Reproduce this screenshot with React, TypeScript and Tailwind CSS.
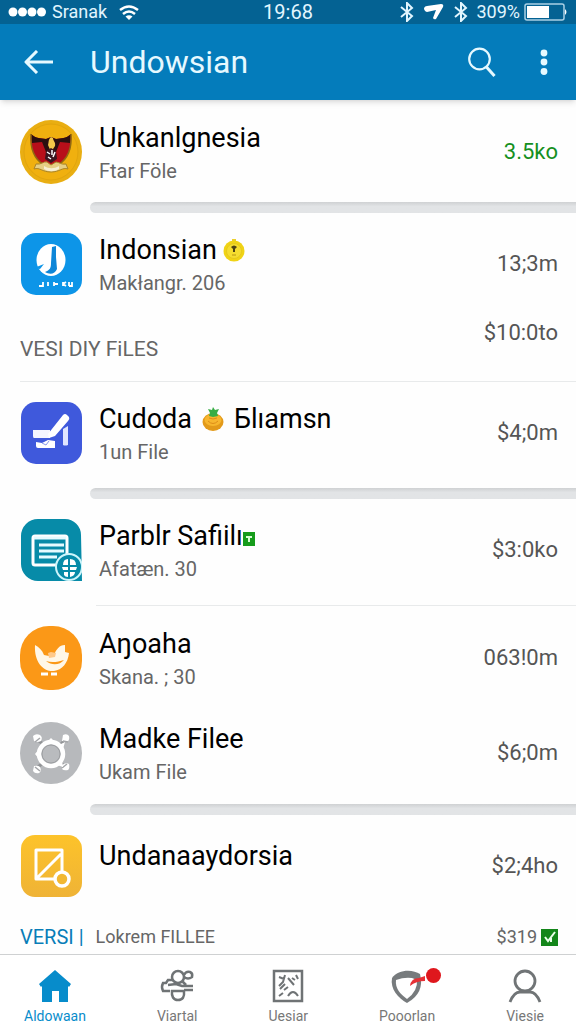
import { ReactNode } from 'react'
import { clsx } from 'clsx'

type Entry = {
  title: ReactNode
  subtitle?: string
  amount: string
  icon: ReactNode
  highlight?: boolean
  spacing?: string
  after?: 'bar' | 'line'
}

function Garuda() {
  return (
    <svg viewBox="0 0 62 64" className="h-16 w-full" aria-hidden="true">
      <ellipse cx="31" cy="32" rx="31" ry="32" fill="#e9ae12" />
      <ellipse cx="31" cy="32" rx="27" ry="28" fill="#f0b00f" stroke="#e2a50d" />
      <path d="M11 14c5 5 10 4 15 5l5-2 5 2c5-1 10 0 15-5 1 14-3 25-13 31H24C14 39 10 28 11 14Z" fill="#b80f1a" />
      <path d="M11 14c5 5 10 4 15 5l5-2 5 2c5-1 10 0 15-5l-1 9-10-1-4 10h-10l-4-10-10 1Z" fill="#2b1010" />
      <path d="M11 14c-1 14 3 25 13 31M51 14c1 14-3 25-13 31" fill="none" stroke="#8f6a12" strokeWidth="1.5" />
      <path d="M31 17c-3 3-2 5-3 8l3 7 4-6c1-4-2-5-2-8Z" fill="#f3c84a" />
      <path d="M26 31l5-3 5 3 1 8-6 4-6-4Z" fill="#3a1620" />
      <path d="M27 32l3 2M32 30v5M35 32l-2 5M28 37l3 2" stroke="#fff" strokeWidth="1.5" />
      <path d="M16 44c5 1 8-3 11-2l4 3 5-3c3 0 5 3 10 2l2 5c-6-2-8 3-17 3s-11-5-17-3Z" fill="#e6cf84" stroke="#a98429" strokeWidth="1" />
      <path d="M24 46c5 3 10 3 15 0v3c-5 3-10 3-15 0Z" fill="#f7efd2" />
    </svg>
  )
}

function BlueBadge() {
  return (
    <svg viewBox="0 0 62 62" className="w-full" aria-hidden="true">
      <rect x="1" width="61" height="62" rx="15" fill="#0d95e8" />
      <ellipse cx="31" cy="27" rx="14.500" ry="16" fill="#fff" />
      <path d="M32 14l4-1v11l1 12c-2 5-7 6-12 3 5-2 6-4 6-9Z" fill="#0d86d8" />
      <path d="M14 35l10-4-4 5Z" fill="#0d95e8" />
      <path d="M19 53h4v-4M28 49v4M34 49v4M34 51h4M43 49v4M43 51l3-2M43 51l3 2M49 49v4M52 49v4h-3" fill="none" stroke="#fff" strokeWidth="1.800" />
    </svg>
  )
}

function ScannerIcon() {
  return (
    <svg viewBox="0 0 62 62" className="w-full" aria-hidden="true">
      <rect x="1" width="61" height="62" rx="15" fill="#3f59dc" />
      <path d="M13 28h17v8H14q-1 0-1-2Z" fill="#f4f6ff" />
      <path d="M28 32L43 13q2-2 4 0l2 2q1 2-1 4L35 34l-6 2Z" fill="#fff" />
      <path d="M43 27l5-3v19q-3 1-5 0Z" fill="#dfe5ff" />
      <path d="M16 40l6 1 6-3 7 1v7H18q-2 0-2-2Z" fill="#fff" />
      <path d="M22 41l4 2 3-4" fill="none" stroke="#8799ec" />
    </svg>
  )
}

function DocumentIcon() {
  return (
    <svg viewBox="0 0 62 62" className="w-full" aria-hidden="true">
      <path d="M18 0h27a16 16 0 0 1 16 16l1 46H18A17 17 0 0 1 1 45V17A17 17 0 0 1 18 0Z" fill="#078ba8" />
      <path d="M15 17h30q2 0 2 2v27H15q-2 0-2-2V19q0-2 2-2Z" fill="none" stroke="#fff" strokeWidth="3" />
      <path d="M14 19h32M19 26h25M19 32h25M19 38h18" stroke="#e5fbff" strokeWidth="3" />
      <circle cx="49" cy="48" r="13" fill="#078ba8" stroke="#cdf5fb" strokeWidth="2" />
      <path d="M43 46q0-6 5-6v6ZM50 40q6 0 6 6h-6ZM42 48h6v3h-5ZM50 48h7l-1 3h-6ZM44 53h4v5q-3 0-4-2ZM50 53h5q0 4-5 5Z" fill="#fff" />
    </svg>
  )
}

function BirdIcon() {
  return (
    <svg viewBox="0 0 62 64" className="h-16 w-full" aria-hidden="true">
      <rect width="62" height="64" rx="29" fill="#fb9817" />
      <path d="M15 19c4 2 7 5 9 10l5 1 5-1c2-5 5-10 11-10v7l4 1c-1 10-7 17-15 18-10 1-20-8-19-26Z" fill="#fff7e8" />
      <path d="M26 35c6 2 12 1 18-1-4 5-12 6-18 1Z" fill="#fb9817" />
      <path d="M28 27l3-1 5 1-1 4-6 1Z" fill="#ffc98a" />
      <path d="M21 48h7M31 48h6" stroke="#fff" strokeWidth="3" />
    </svg>
  )
}

function GearIcon() {
  return (
    <svg viewBox="0 0 62 62" className="w-full" aria-hidden="true">
      <circle cx="31" cy="31" r="31" fill="#b7b9bc" />
      <path d="M18 18l7 6M45 18l-5 5M18 45l6-5M44 44l-5-5" stroke="#929497" strokeWidth="3" />
      <path d="M13 14q3-3 7-1 3 2 1 6-4 2-7 0Z" fill="#fff" />
      <path d="M43 13q4-2 6 1 1 4-2 6l-5-1Z" fill="#fff" />
      <path d="M14 44q4-1 6 1 2 4-1 6-4 1-6-2Z" fill="#fff" />
      <path d="M42 43q4-3 7-1 1 4-1 6-4 1-6-1Z" fill="#fff" />
      <path d="M15 20l5-4M43 19l5 1M15 45l5 4M42 46l5-4" stroke="#a4a6a9" strokeWidth="1.5" />
      <circle cx="31" cy="32" r="12" fill="#b9bbbe" stroke="#fff" strokeWidth="4.500" />
      <circle cx="31" cy="32" r="9" fill="none" stroke="#9c9ea1" />
      <path d="M26 21l5-5 5 5ZM19 37l-4-5 4-5ZM39 23l6-3-2 7ZM37 43l6 2-1-7Z" fill="#fff" />
    </svg>
  )
}

function NoteIcon() {
  return (
    <svg viewBox="0 0 62 62" className="w-full" aria-hidden="true">
      <defs>
        <linearGradient id="note" x1="0" y1="0" x2="0" y2="1">
          <stop stopColor="#fdc32a" />
          <stop offset="1" stopColor="#efb336" />
        </linearGradient>
      </defs>
      <rect x="1" width="61" height="62" rx="14" fill="url(#note)" />
      <path d="M42 37V15H16v29h18M17 43L41 19" fill="none" stroke="#fff" strokeWidth="3" strokeLinejoin="round" />
      <circle cx="42" cy="44" r="7" fill="#f2b832" stroke="#fff" strokeWidth="3.500" />
    </svg>
  )
}

function YellowDot() {
  return (
    <svg viewBox="0 0 22 24" className="h-6 w-[22px]" aria-hidden="true">
      <path d="M9 1h4v4H9Z" fill="#ecd02e" />
      <circle cx="11" cy="13" r="10.500" fill="#f0d315" />
      <circle cx="11" cy="13" r="7.500" fill="#f5dd30" stroke="#e2c41b" strokeWidth=".8" />
      <path d="M8 9q3-3 6 0l-2 2v3h-2v-3Z" fill="#4c4215" />
      <path d="M9 17h4" stroke="#b79512" />
    </svg>
  )
}

function Pineapple() {
  return (
    <svg viewBox="0 0 22 24" className="h-6 w-[22px]" aria-hidden="true">
      <ellipse cx="11" cy="15" rx="10.500" ry="9" fill="#e39a1a" />
      <ellipse cx="11" cy="13" rx="8.500" ry="6" fill="#f7b62e" />
      <path d="M6 14q5 5 10 0M7 11q4 2 8 0" fill="none" stroke="#dd8d18" />
      <path d="M11 10L7 9 8 6 6 2l4 1 1-3 2 3 4-1-2 4 1 3Z" fill="#37ad45" />
    </svg>
  )
}

const beforeSection: Entry[] = [
  {
    title: 'Unkanlgnesia',
    subtitle: 'Ftar Föle',
    amount: '3.5ko',
    icon: <Garuda />,
    highlight: true,
    spacing: 'pb-[18px]',
    after: 'bar',
  },
  {
    title: (
      <>
        Indonsian
        <span className="ml-1.5"><YellowDot /></span>
      </>
    ),
    subtitle: 'Makłangr. 206',
    amount: '13;3m',
    icon: <BlueBadge />,
  },
]

const afterSection: Entry[] = [
  {
    title: (
      <>
        Cudoda
        <span className="mx-2.5"><Pineapple /></span>
        Бlıamsn
      </>
    ),
    subtitle: '1un File',
    amount: '$4;0m',
    icon: <ScannerIcon />,
    spacing: 'pb-6',
    after: 'bar',
  },
  {
    title: (
      <>
        Parblr Safiilı
        <svg viewBox="0 0 12 14" className="mt-1.5 h-3.5 w-3" aria-hidden="true">
          <path d="M0 0h12v14H0Z" fill="#169c1b" />
          <path d="M3 5h6M6 5v5" stroke="#d9ffd4" strokeWidth="2" />
        </svg>
      </>
    ),
    subtitle: 'Afatæn. 30',
    amount: '$3:0ko',
    icon: <DocumentIcon />,
    spacing: 'pb-6',
    after: 'line',
  },
  { title: 'Aŋoaha', subtitle: 'Skana. ; 30', amount: '063!0m', icon: <BirdIcon />, spacing: 'pb-3' },
  { title: 'Madke Filee', subtitle: 'Ukam File', amount: '$6;0m', icon: <GearIcon />, after: 'bar' },
  { title: 'Undanaaydorsia', amount: '$2;4ho', icon: <NoteIcon /> },
]

function EntryRow({ entry }: { entry: Entry }) {
  return (
    <li>
      <div className={clsx('flex items-center pt-5 pr-[18px] pl-5', entry.spacing ?? 'pb-5')}>
        <div className="w-[62px] shrink-0">{entry.icon}</div>
        <div className={clsx('ml-[17px] h-[62px] min-w-0 flex-1', !entry.subtitle && 'pt-1')}>
          <h2 className="flex items-center text-[27px] leading-[34px] whitespace-nowrap text-black">{entry.title}</h2>
          {entry.subtitle && <p className="text-xl leading-8 text-[#666]">{entry.subtitle}</p>}
        </div>
        <span className={clsx('text-[22px] leading-7', entry.highlight ? 'text-[#15901f]' : 'text-[#555]')}>
          {entry.amount}
        </span>
      </div>
      {entry.after === 'bar' && (
        <div className="ml-[90px] h-[11px] rounded-l-full bg-linear-to-b from-[#cfd1d3] to-[#e2e4e6] to-40%" />
      )}
      {entry.after === 'line' && <div className="ml-24 h-px bg-[#e8eaeb]" />}
    </li>
  )
}

function Bluetooth() {
  return (
    <svg viewBox="0 0 14 20" className="h-5 w-3.5" fill="none" stroke="currentColor" strokeWidth="2" aria-hidden="true">
      <path d="M1 5l11 9-5 5V1l5 5L1 15" />
    </svg>
  )
}

function StatusBar() {
  return (
    <div className="grid h-6 grid-cols-[1fr_auto_1fr] items-center bg-[#046293] pr-2 pl-2 text-[#e2f6ff]">
      <div className="flex items-center">
        <svg viewBox="0 0 38 10" className="h-2.5 w-[38px]" fill="#fff" aria-hidden="true">
          <circle cx="5" cy="5" r="4.500" />
          <circle cx="14.500" cy="5" r="4.500" />
          <circle cx="24" cy="5" r="4.500" />
          <circle cx="33.500" cy="5" r="4.500" />
        </svg>
        <span className="ml-1.5 text-lg leading-5">Sranak</span>
        <svg viewBox="0 0 20 15" className="ml-3 h-[15px] w-5" fill="none" stroke="#fff" strokeWidth="2.500" aria-hidden="true">
          <path d="M1 5q9-7 18 0M4 9q6-5 12 0" />
          <path d="M6.500 11.500q3.500-2.500 7 0L10 15Z" fill="#fff" stroke="none" />
        </svg>
      </div>
      <span className="text-xl leading-5">19:68</span>
      <div className="flex items-center justify-end">
        <Bluetooth />
        <svg viewBox="0 0 20 18" className="mx-2.5 h-[18px] w-5" aria-hidden="true">
          <path d="M0 5Q1 3 3 3L17 1q3 0 2 3l-7 12q-2 1-3-1l3-8-9 2Q0 8 0 5Z" fill="#fff" />
        </svg>
        <Bluetooth />
        <span className="ml-2 text-lg leading-5">309%</span>
        <svg viewBox="0 0 44 18" className="ml-1 h-[18px] w-11" aria-hidden="true">
          <rect x="1" y="1" width="39" height="16" rx="2" fill="none" stroke="#a9d0e5" strokeWidth="1.500" />
          <rect x="3" y="3" width="22" height="12" fill="#fff" />
          <path d="M41 6q3 3 0 6Z" fill="#fff" />
        </svg>
      </div>
    </div>
  )
}

function Header() {
  return (
    <header className="relative z-10 bg-[#047cbb] text-[#e6f9ff] shadow-md">
      <StatusBar />
      <div className="flex h-[76px] items-center pr-4 pl-5">
        <button aria-label="Back" className="p-1">
          <svg viewBox="0 0 30 24" className="h-6 w-[30px]" fill="none" stroke="currentColor" strokeWidth="3" aria-hidden="true">
            <path d="M13 1L2 12l11 11M2 12h27" strokeLinejoin="round" />
          </svg>
        </button>
        <h1 className="ml-8 flex-1 text-[32px] leading-10">Undowsian</h1>
        <button aria-label="Search" className="p-1">
          <svg viewBox="0 0 28 30" className="h-[30px] w-7" fill="none" stroke="currentColor" strokeWidth="2.200" aria-hidden="true">
            <circle cx="11.500" cy="12" r="10.300" />
            <path d="M18.500 20L26.500 29" strokeWidth="3" />
          </svg>
        </button>
        <button aria-label="More options" className="ml-7 px-3 py-1">
          <svg viewBox="0 0 8 26" className="h-[26px] w-2" fill="currentColor" aria-hidden="true">
            <circle cx="4" cy="4" r="3.400" />
            <circle cx="4" cy="13" r="3.400" />
            <circle cx="4" cy="22.500" r="3.400" />
          </svg>
        </button>
      </div>
    </header>
  )
}

const tabs = [
  {
    label: 'Aldowaan',
    active: true,
    icon: <path d="M16 0L32 14l-2 3-1-1v16h-9V21h-7v11H3V16l-1 1-2-3Z" fill="#078ccb" />,
  },
  {
    label: 'Viartal',
    icon: (
      <g fill="none" stroke="#6f7375" strokeWidth="2.500">
        <circle cx="17" cy="7" r="6" />
        <path d="M23 5q2-4 6-3 3 1 2 5-4 3-8 0M12 10H7L5 13H2q-2 4 0 8h7M7 15l8-1 6 2h11M21 11l4 4M23 20h9" />
        <path d="M11 20q-1 10 6 10t6-9H10" />
      </g>
    ),
  },
  {
    label: 'Uesiar',
    icon: (
      <g fill="none" stroke="#6f7375" strokeWidth="2.500">
        <path d="M2 1h28v30H2Z" />
        <path d="M7 7l5 2M13 5l-2 7-4 4M16 8l6 7M20 8l3 2M24 5l2 4M8 19l5-5M7 26l4-3M16 26q5-8 10 0M12 20l4-3" strokeWidth="2" />
      </g>
    ),
  },
  {
    label: 'Pooorlan',
    icon: (
      <>
        <path d="M16 33C7 28-1 19 1 8 7-1 22-1 29 4q5 19-13 29Z" fill="#777b7d" />
        <path d="M16 29C9 24 4 18 5 10q8-3 16-2l5 2q1 11-10 19Z" fill="#fff" />
        <path d="M19 16q1-8 9-8l6-2v5q-9 0-15 5Z" fill="#e63035" />
      </>
    ),
  },
  {
    label: 'Viesie',
    icon: (
      <g fill="none" stroke="#707476" strokeWidth="2.800">
        <circle cx="16" cy="11" r="10" />
        <path d="M1 32q4-10 10-10h10q6 0 10 10" />
      </g>
    ),
  },
]

function TabBar() {
  return (
    <nav className="mt-auto flex justify-between border-t border-[#cfd1d2] bg-white pt-[15px] pr-8 pl-6">
      {tabs.map((tab) => (
        <a
          key={tab.label}
          href="#"
          aria-current={tab.active ? 'page' : undefined}
          className={clsx('flex flex-col items-center', tab.active ? 'text-[#078ccb]' : 'text-[#777]')}
        >
          <span className="relative">
            <svg viewBox="0 0 32 32" className="h-8 w-8 overflow-visible" aria-hidden="true">{tab.icon}</svg>
            {tab.label === 'Pooorlan' && (
              <span className="absolute -top-0.5 -right-[18px] size-[15px] rounded-full bg-[#df171d]" />
            )}
          </span>
          <span className="mt-1.5 text-sm leading-4">{tab.label}</span>
        </a>
      ))}
    </nav>
  )
}

export default function App() {
  return (
    <div className="flex min-h-screen flex-col bg-[#fefefe] font-['Roboto','Liberation_Sans',sans-serif]">
      <Header />
      <main>
        <ul>
          {beforeSection.map((entry, i) => (
            <EntryRow key={i} entry={entry} />
          ))}
        </ul>
        <div className="ml-5 flex h-[67px] items-start justify-between border-b border-[#e8eaeb] pr-[18px] text-[#666]">
          <h3 className="mt-5 text-[21px] leading-7">VESI DIY FiLES</h3>
          <span className="mt-1 text-[22px] leading-7 text-[#555]">$10:0to</span>
        </div>
        <ul>
          {afterSection.map((entry, i) => (
            <EntryRow key={i} entry={entry} />
          ))}
        </ul>
        <div className="flex h-9 items-center justify-between pt-1 pr-[18px] pl-5 leading-7 text-[#666]">
          <h3 className="flex items-center">
            <span className="text-xl text-[#087db8]">VERSI |</span>
            <span className="ml-3 text-lg">Lokrem FILLEE</span>
          </h3>
          <span className="flex items-center gap-1 text-lg">
            $319
            <svg viewBox="0 0 17 17" className="size-[17px]" aria-hidden="true">
              <path d="M0 0h17v17H0Z" fill="#13861a" />
              <path d="M4 8l3 4 7-9M10 9v4" fill="none" stroke="#eaffea" strokeWidth="2" />
            </svg>
          </span>
        </div>
      </main>
      <TabBar />
    </div>
  )
}
